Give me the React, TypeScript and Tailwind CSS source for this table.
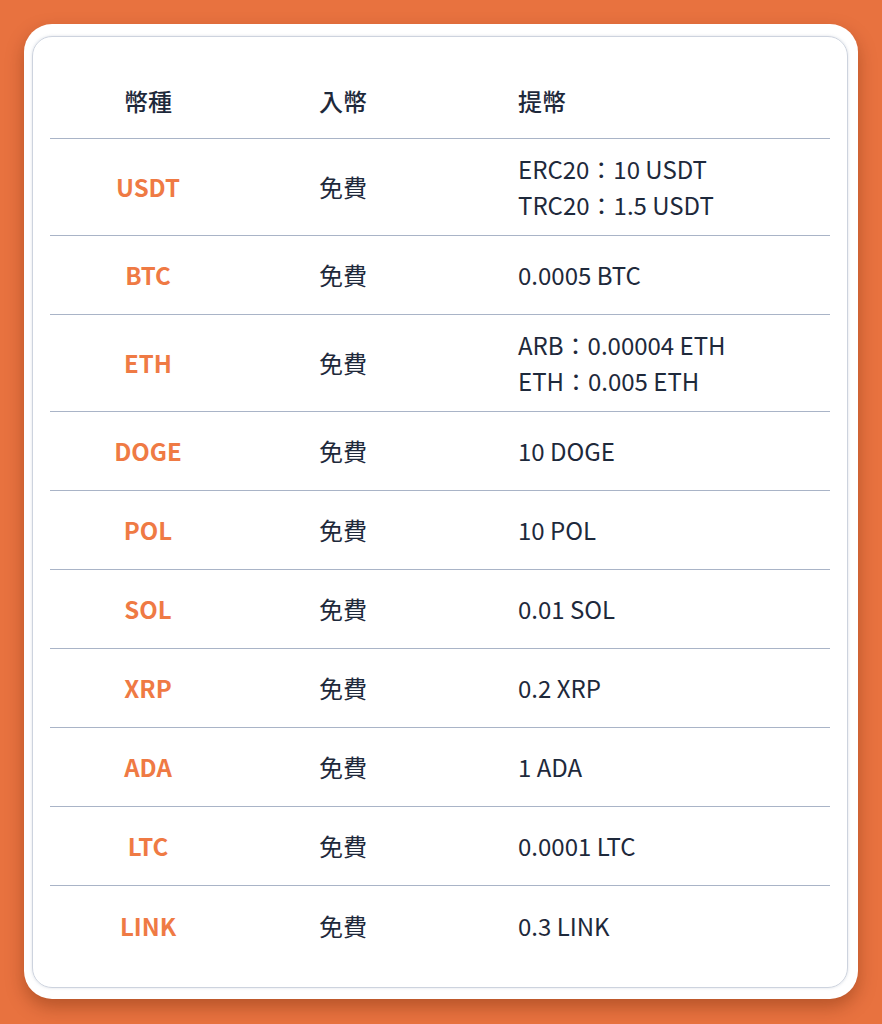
import React from 'react';

interface FeeRow {
    coin: string;
    deposit: string;
    withdraw: string[];
}

const rows: FeeRow[] = [
    { coin: 'USDT', deposit: '免費', withdraw: ['ERC20：10 USDT', 'TRC20：1.5 USDT'] },
    { coin: 'BTC', deposit: '免費', withdraw: ['0.0005 BTC'] },
    { coin: 'ETH', deposit: '免費', withdraw: ['ARB：0.00004 ETH', 'ETH：0.005 ETH'] },
    { coin: 'DOGE', deposit: '免費', withdraw: ['10 DOGE'] },
    { coin: 'POL', deposit: '免費', withdraw: ['10 POL'] },
    { coin: 'SOL', deposit: '免費', withdraw: ['0.01 SOL'] },
    { coin: 'XRP', deposit: '免費', withdraw: ['0.2 XRP'] },
    { coin: 'ADA', deposit: '免費', withdraw: ['1 ADA'] },
    { coin: 'LTC', deposit: '免費', withdraw: ['0.0001 LTC'] },
    { coin: 'LINK', deposit: '免費', withdraw: ['0.3 LINK'] },
];

export default function App() {
    return (
        <div
            className="min-h-[1024px] w-full bg-[#e8723f] pt-[24px] px-[24px]"
            style={{ fontFamily: '"Noto Sans CJK TC", "Noto Sans", sans-serif' }}
        >
            <div className="bg-white rounded-[28px] pt-[12px] pb-[11px] pl-[8px] pr-[10px] shadow-[0_8px_18px_rgba(90,30,0,0.35)]">
                <div className="border border-[#cdd3de] rounded-[20px] px-[17px] pb-[22px] shadow-[0_0_3px_rgba(150,160,180,0.35)]">
                    <div className="flex items-center h-[102px] pt-[26px] border-b border-[#a9b4c7] text-[24px] leading-[36px] text-[#1e293b] font-medium">
                        <div className="w-[196px] text-center">幣種</div>
                        <div className="w-[272px] pl-[73px]">入幣</div>
                        <div className="flex-1">提幣</div>
                    </div>
                    {rows.map((row, i) => (
                        <div
                            key={row.coin}
                            className={`flex items-center text-[24px] leading-[36px] ${row.withdraw.length > 1 ? 'h-[97px]' : 'h-[79px]'} ${i < rows.length - 1 ? 'border-b border-[#a9b4c7]' : ''}`}
                        >
                            <div className="w-[196px] text-center font-bold text-[#ef7a44]">{row.coin}</div>
                            <div className="w-[272px] pl-[73px] text-[#1e293b]">{row.deposit}</div>
                            <div className="flex-1 text-[#1e293b]">
                                {row.withdraw.map(w => (
                                    <div key={w}>{w}</div>
                                ))}
                            </div>
                        </div>
                    ))}
                </div>
            </div>
        </div>
    );
}
